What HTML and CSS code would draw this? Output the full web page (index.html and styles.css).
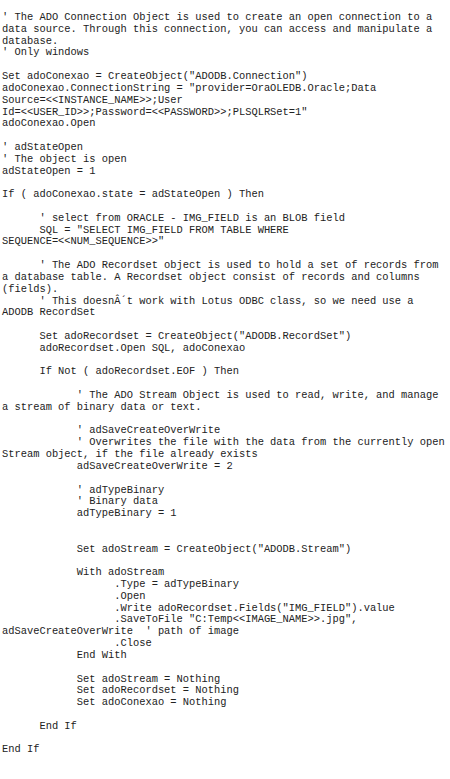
FILE: index.html
```html
<!DOCTYPE html>
<html>
<head>
<meta charset="utf-8">
<link rel="stylesheet" href="styles.css">
</head>
<body>
<pre class="code">' The ADO Connection Object is used to create an open connection to a
data source. Through this connection, you can access and manipulate a
database.
' Only windows

Set adoConexao = CreateObject("ADODB.Connection")
adoConexao.ConnectionString = "provider=OraOLEDB.Oracle;Data
Source=&lt;&lt;INSTANCE_NAME&gt;&gt;;User
Id=&lt;&lt;USER_ID&gt;&gt;;Password=&lt;&lt;PASSWORD&gt;&gt;;PLSQLRSet=1"
adoConexao.Open

' adStateOpen
' The object is open
adStateOpen = 1

If ( adoConexao.state = adStateOpen ) Then

      ' select from ORACLE - IMG_FIELD is an BLOB field
      SQL = "SELECT IMG_FIELD FROM TABLE WHERE
SEQUENCE=&lt;&lt;NUM_SEQUENCE&gt;&gt;"

      ' The ADO Recordset object is used to hold a set of records from
a database table. A Recordset object consist of records and columns
(fields).
      ' This doesnÂ´t work with Lotus ODBC class, so we need use a
ADODB RecordSet

      Set adoRecordset = CreateObject("ADODB.RecordSet")
      adoRecordset.Open SQL, adoConexao

      If Not ( adoRecordset.EOF ) Then

            ' The ADO Stream Object is used to read, write, and manage
a stream of binary data or text.

            ' adSaveCreateOverWrite
            ' Overwrites the file with the data from the currently open
Stream object, if the file already exists
            adSaveCreateOverWrite = 2

            ' adTypeBinary
            ' Binary data
            adTypeBinary = 1


            Set adoStream = CreateObject("ADODB.Stream")

            With adoStream
                  .Type = adTypeBinary
                  .Open
                  .Write adoRecordset.Fields("IMG_FIELD").value
                  .SaveToFile "C:Temp&lt;&lt;IMAGE_NAME&gt;&gt;.jpg",
adSaveCreateOverWrite  ' path of image
                  .Close
            End With

            Set adoStream = Nothing
            Set adoRecordset = Nothing
            Set adoConexao = Nothing

      End If

End If</pre>
</body>
</html>
```

FILE: styles.css
```css
html, body {
  margin: 0;
  padding: 0;
  background: #ffffff;
}

.code {
  margin: 0;
  padding: 12px 0 0 2px;
  font-family: "Liberation Mono", "Courier New", monospace;
  font-size: 10.4px;
  line-height: 11.82px;
  color: #222222;
  white-space: pre;
}
```
